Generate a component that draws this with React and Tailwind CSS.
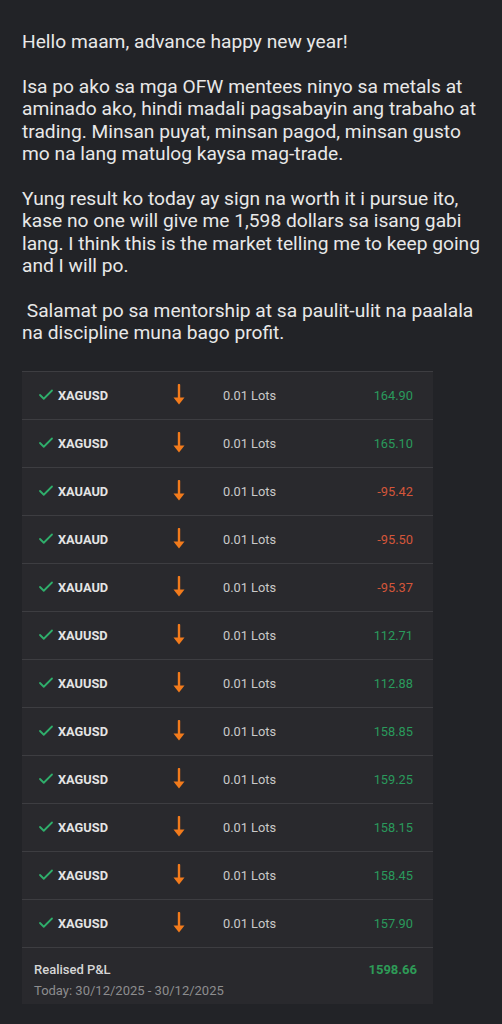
import { Check } from 'lucide-react'

const trades = [
  { symbol: 'XAGUSD', pnl: '164.90' },
  { symbol: 'XAGUSD', pnl: '165.10' },
  { symbol: 'XAUAUD', pnl: '-95.42' },
  { symbol: 'XAUAUD', pnl: '-95.50' },
  { symbol: 'XAUAUD', pnl: '-95.37' },
  { symbol: 'XAUUSD', pnl: '112.71' },
  { symbol: 'XAUUSD', pnl: '112.88' },
  { symbol: 'XAGUSD', pnl: '158.85' },
  { symbol: 'XAGUSD', pnl: '159.25' },
  { symbol: 'XAGUSD', pnl: '158.15' },
  { symbol: 'XAGUSD', pnl: '158.45' },
  { symbol: 'XAGUSD', pnl: '157.90' },
]

function DownArrow() {
  return (
    <svg width="14" height="22" viewBox="0 0 14 22" className="text-[#f27b1c]">
      <path d="M7 1v14" stroke="currentColor" strokeWidth="2.4" strokeLinecap="round" />
      <path d="M1.5 13.5L7 20.5l5.5-7z" fill="currentColor" />
    </svg>
  )
}

export default function App() {
  return (
    <div className="w-[502px] h-[1024px] bg-[#222327] overflow-hidden font-['Roboto',sans-serif]">
      {/* Message */}
      <div className="pl-[22px] pr-[18px] pt-[31px] text-[19.2px] leading-[22.4px] text-[#e8e8e8]">
        <p className="mb-[22.4px]">Hello maam, advance happy new year!</p>
        <p className="mb-[22.4px]">
          Isa po ako sa mga OFW mentees ninyo sa metals at aminado ako, hindi madali pagsabayin ang trabaho at trading. Minsan puyat, minsan pagod, minsan gusto mo na lang matulog kaysa mag-trade.
        </p>
        <p className="mb-[22.4px]">
          Yung result ko today ay sign na worth it i pursue ito, kase no one will give me 1,598 dollars sa isang gabi lang. I think this is the market telling me to keep going and I will po.
        </p>
        <p>&nbsp;Salamat po sa mentorship at sa paulit-ulit na paalala na discipline muna bago profit.</p>
      </div>

      {/* Trade history screenshot */}
      <div className="mt-[26px] ml-[22px] w-[411px] bg-[#29292d] border-t border-[#3d3d41]">
        {trades.map(({ symbol, pnl }, i) => (
          <div key={i} className="h-[48px] flex items-center border-b border-[#3d3d41] text-[12.8px]">
            <div className="w-[136px] flex items-center pl-[15px]">
              <Check size={18} strokeWidth={2.4} className="text-[#2fae6b]" />
              <span className="ml-[3px] font-bold text-[#e4e4e4]">{symbol}</span>
            </div>
            <div className="w-[65px] flex justify-start pl-[14px]">
              <DownArrow />
            </div>
            <span className="text-[#c9c9c9]">0.01 Lots</span>
            <span className={`ml-auto pr-[20px] ${pnl.startsWith('-') ? 'text-[#d4563a]' : 'text-[#2a9a5c]'}`}>
              {pnl}
            </span>
          </div>
        ))}
        <div className="h-[56px] px-[12px] pt-[11px] flex justify-between">
          <div className="text-[13px] leading-[21px]">
            <p className="font-medium text-[#d6d6d6]">Realised P&amp;L</p>
            <p className="text-[#8d8d8f]">Today: 30/12/2025 - 30/12/2025</p>
          </div>
          <p className="text-[13px] leading-[21px] font-bold text-[#2e9b57] pr-[4px]">1598.66</p>
        </div>
      </div>
    </div>
  )
}
